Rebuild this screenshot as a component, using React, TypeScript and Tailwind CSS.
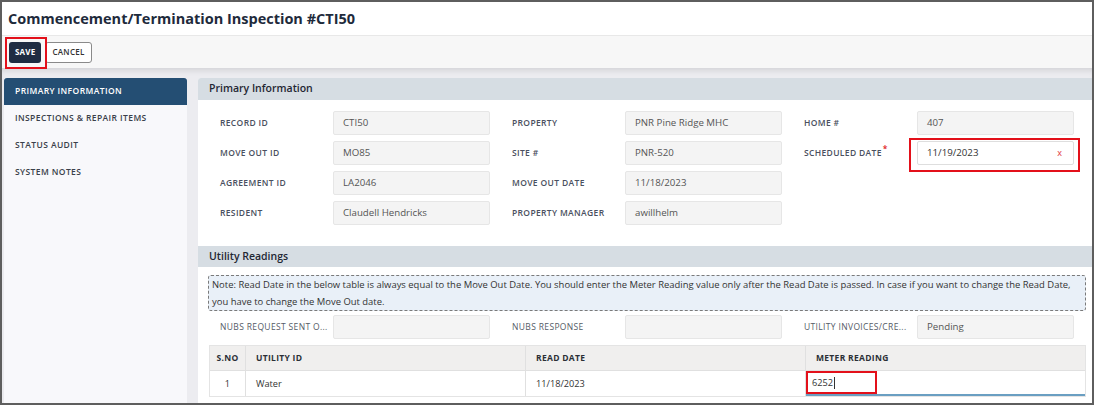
import React from "react";

const font = { fontFamily: '"Open Sans", "Noto Sans", sans-serif' };

function Field({ label, value, star, active, light, children }: { label: string; value?: string; star?: boolean; active?: boolean; light?: boolean; children?: React.ReactNode }) {
  return (
    <div className="relative flex items-center h-[24px] w-[292px]">
      <div className={`w-[135px] pl-[22px] pr-[4px] text-[8.5px] tracking-[0.35px] whitespace-nowrap ${light ? "font-normal text-[#555b66] overflow-hidden" : "font-semibold text-[#4a5060]"}`}>
        {label}
        {star && <span className="text-[#e02020] relative top-[-4px] ml-[1px]">*</span>}
      </div>
      <div className="w-[157px] h-[24px] flex items-center">
        {active ? (
          <div className="w-full h-full bg-white border border-[#dedede] rounded-[2px] flex items-center px-[9px] text-[9.7px] text-[#333]">
            <span className="flex-1">{value}</span>
            <span className="text-[#e0333a] text-[9px] mr-[2px]">x</span>
          </div>
        ) : (
          <div className="w-full h-full bg-[#f4f4f4] border border-[#e6e6e6] rounded-[2px] flex items-center px-[9px] text-[9.7px] font-medium text-[#555]">
            {value}
          </div>
        )}
      </div>
      {children}
    </div>
  );
}

export default function App() {
  return (
    <div className="w-[1096px] h-[407px] bg-white" style={font}>
      <div className="relative w-[1094px] h-[405px] border-2 border-[#5e5e5e] flex flex-col overflow-hidden">
        <div className="h-[33px] flex items-center pl-[6px] text-[14.5px] font-bold text-[#1e2a3b]">
          Commencement/Termination Inspection #CTI50
        </div>
        <div className="h-[33px] bg-[#f7f7f7] border-t border-[#e8e8e8] flex items-center pl-[7px] gap-[4px]">
          <button className="h-[21px] px-[6px] rounded-[3px] bg-[#1f2c42] text-white text-[8px] font-bold tracking-[0.2px]">SAVE</button>
          <button className="h-[21px] px-[6px] rounded-[3px] bg-white border border-[#8a8a8a] text-[#333] text-[8px] font-semibold tracking-[0.3px]">CANCEL</button>
        </div>
        <div className="absolute left-[3px] top-[35px] w-[42px] h-[32px] border-[2px] border-[#e3101a]" />
        <div className="flex-1 flex bg-[#ececf0] pt-[10px] shadow-[inset_0_6px_6px_-4px_rgba(0,0,0,0.12)]">
          <div className="w-[183px] ml-[2px] bg-[#f8f8fb] flex flex-col">
            <div className="h-[27px] bg-[#244e73] rounded-t-[3px] flex items-center pl-[11px] text-[8.5px] font-semibold text-white tracking-[0.4px]">PRIMARY INFORMATION</div>
            <div className="h-[27px] flex items-center pl-[11px] text-[8.5px] font-semibold text-[#3a3f4a] tracking-[0.4px]">INSPECTIONS &amp; REPAIR ITEMS</div>
            <div className="h-[27px] flex items-center pl-[11px] text-[8.5px] font-semibold text-[#3a3f4a] tracking-[0.4px]">STATUS AUDIT</div>
            <div className="h-[27px] flex items-center pl-[11px] text-[8.5px] font-semibold text-[#3a3f4a] tracking-[0.4px]">SYSTEM NOTES</div>
          </div>
          <div className="flex-1 ml-[11px] bg-white rounded-tl-[3px] flex flex-col">
            <div className="h-[22px] bg-[#d6dde3] rounded-tl-[3px] flex items-center pl-[11px] text-[10.5px] font-semibold text-[#1f2733]">Primary Information</div>
            <div className="pt-[11px] flex flex-col gap-[6px]">
              <div className="flex">
                <Field label="RECORD ID" value="CTI50" />
                <Field label="PROPERTY" value="PNR Pine Ridge MHC" />
                <Field label="HOME #" value="407" />
              </div>
              <div className="flex">
                <Field label="MOVE OUT ID" value="MO85" />
                <Field label="SITE #" value="PNR-520" />
                <Field label="SCHEDULED DATE" value="11/19/2023" star active>
                  <div className="absolute left-[127px] top-[-3px] w-[171px] h-[34px] border-[2px] border-[#e3101a]" />
                </Field>
              </div>
              <div className="flex">
                <Field label="AGREEMENT ID" value="LA2046" />
                <Field label="MOVE OUT DATE" value="11/18/2023" />
              </div>
              <div className="flex">
                <Field label="RESIDENT" value="Claudell Hendricks" />
                <Field label="PROPERTY MANAGER" value="awillhelm" />
              </div>
            </div>
            <div className="mt-[21px] h-[21px] bg-[#d6dde3] flex items-center pl-[11px] text-[10.5px] font-semibold text-[#1f2733]">Utility Readings</div>
            <div className="ml-[10px] mr-[6px] mt-[8px] h-[36px] border border-dashed border-[#7a7a7a] rounded-[3px] bg-[#e9f0f8] px-[3px] flex flex-col justify-center text-[9.45px] font-medium text-[#333] leading-[17px] whitespace-nowrap">
              <div>Note: Read Date in the below table is always equal to the Move Out Date. You should enter the Meter Reading value only after the Read Date is passed. In case if you want to change the Read Date,</div>
              <div>you have to change the Move Out date.</div>
            </div>
            <div className="flex mt-[4px]">
              <Field label="NUBS REQUEST SENT O..." value="" light />
              <Field label="NUBS RESPONSE" value="" light />
              <Field label="UTILITY INVOICES/CRE..." value="Pending" light />
            </div>
            <div className="ml-[11px] mr-[6px] mt-[6px] border border-[#e4e4e4]">
              <div className="flex h-[25px] bg-[#f0efee] border-b border-[#e0e0e0] text-[8.5px] font-bold text-[#2b2f36] tracking-[0.3px]">
                <div className="w-[36px] border-r border-[#e0e0e0] flex items-center justify-center">S.NO</div>
                <div className="w-[280px] border-r border-[#e0e0e0] flex items-center pl-[10px]">UTILITY ID</div>
                <div className="w-[280px] border-r border-[#e0e0e0] flex items-center pl-[10px]">READ DATE</div>
                <div className="flex-1 flex items-center pl-[10px]">METER READING</div>
              </div>
              <div className="flex h-[25px] bg-white text-[9.2px] font-medium text-[#333]">
                <div className="w-[36px] border-r border-[#e0e0e0] flex items-center justify-center">1</div>
                <div className="w-[280px] border-r border-[#e0e0e0] flex items-center pl-[10px]">Water</div>
                <div className="w-[280px] border-r border-[#e0e0e0] flex items-center pl-[10px]">11/18/2023</div>
                <div className="relative flex-1 flex items-center pl-[6px] border-b-2 border-[#6a9fc2]">
                  <span>6252</span>
                  <span className="w-px h-[12px] bg-[#333] ml-[1px]" />
                  <div className="absolute left-0 top-0 w-[71px] h-[23px] border-[2px] border-[#e3101a]" />
                </div>
              </div>
            </div>
          </div>
        </div>
      </div>
    </div>
  );
}
